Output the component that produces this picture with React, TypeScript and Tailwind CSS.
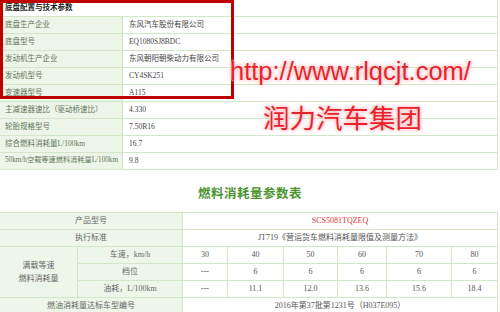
import React from "react";

const specs: [string, string][] = [
  ["底盘生产企业", "东风汽车股份有限公司"],
  ["底盘型号", "EQ1080SJ8BDC"],
  ["发动机生产企业", "东风朝阳朝柴动力有限公司"],
  ["发动机型号", "CY4SK251"],
  ["变速器型号", "A115"],
  ["主减速器速比（驱动桥速比）", "4.330"],
  ["轮胎规格型号", "7.50R16"],
  ["综合燃料消耗量L/100km", "16.7"],
  ["50km/h空载等速燃料消耗量L/100km", "9.8"],
];

const speeds = ["30", "40", "50", "60", "70", "80"];
const gears = ["---", "6", "6", "6", "6", "6"];
const fuel = ["---", "11.1", "12.0", "13.6", "15.6", "18.4"];

const line = "border-[#d2e7c8]";
const label = `bg-[#eef6e9] border-r border-b ${line} flex items-center justify-center text-[#666] whitespace-nowrap`;
const cell = `border-r border-b ${line} flex items-center justify-center text-[#555] whitespace-nowrap`;

export default function App() {
  return (
    <div
      className="relative w-[500px] h-[312px] overflow-hidden bg-white text-[7.5px] leading-none"
      style={{ fontFamily: '"Liberation Serif", "Noto Sans CJK SC", serif' }}
    >
      {/* chassis table */}
      <div className={`w-[498px] border-r ${line}`}>
        <div className={`h-[17px] border-b ${line} pl-[5px] flex items-center font-bold text-[#222]`}>
          底盘配置与技术参数
        </div>
        {specs.map(([k, v]) => (
          <div key={k} className={`grid grid-cols-[123px_1fr] h-[17px] border-b ${line}`}>
            <div
              className={`bg-[#edf5e8] border-r ${line} pl-[5px] flex items-center whitespace-nowrap overflow-hidden text-[#5f7658] ${
                k.length > 20 ? "text-[7.2px]" : ""
              }`}
            >
              {k}
            </div>
            <div className="pl-[6px] flex items-center text-[#444]">{v}</div>
          </div>
        ))}
      </div>

      <div className="h-[42px] pt-[4px] flex items-center justify-center">
        <span
          className="text-[12.5px] font-bold text-[#4b9430] tracking-[0.5px]"
          style={{ fontFamily: '"Noto Sans CJK SC", sans-serif' }}
        >
          燃料消耗量参数表
        </span>
      </div>

      {/* fuel table */}
      <div
        className={`w-[498px] border-t ${line} grid grid-cols-[78px_105px_45px_56px_54px_49px_65px_46px] auto-rows-[17px] text-[8px]`}
      >
        <div className={`${label} col-span-2`}>产品型号</div>
        <div className={`${cell} col-span-6 text-[#d9383a]`}>SCS5081TQZEQ</div>

        <div className={`${label} col-span-2`}>执行标准</div>
        <div className={`${cell} col-span-6`}>JT719《营运货车燃料消耗量限值及测量方法》</div>

        <div className={`${label} row-span-3 flex-col gap-[5px]`}>
          <span>满载等速</span>
          <span>燃料消耗量</span>
        </div>
        <div className={label}>车速，km/h</div>
        {speeds.map((s, i) => (
          <div key={"s" + i} className={cell}>{s}</div>
        ))}
        <div className={label}>档位</div>
        {gears.map((s, i) => (
          <div key={"g" + i} className={cell}>{s}</div>
        ))}
        <div className={label}>油耗，L/100km</div>
        {fuel.map((s, i) => (
          <div key={"f" + i} className={cell}>{s}</div>
        ))}

        <div className={`${label} col-span-2`}>燃油消耗量达标车型编号</div>
        <div className={`${cell} col-span-6`}>2016年第37批第1231号（H037E095）</div>
      </div>

      {/* highlight box */}
      <div className="absolute left-0 top-0 w-[234px] h-[99px] border-[3px] border-[#c00000]" />

      {/* watermark */}
      <div
        className="absolute left-[230px] top-[59px] text-[25.5px] leading-[25px] text-[#e8222a] [text-shadow:0_0_2px_#fff,0_0_3px_#ff9ca2,0_0_5px_#ffb8bc]"
        style={{ fontFamily: '"Liberation Sans", sans-serif' }}
      >
        http://www.rlqcjt.com/
      </div>
      <div
        className="absolute left-[263px] top-[103px] text-[26.5px] leading-[27px] text-[#e8222a] [text-shadow:0_0_2px_#fff,0_0_3px_#ff9ca2,0_0_5px_#ffb8bc]"
        style={{ fontFamily: '"Noto Sans CJK SC", sans-serif' }}
      >
        润力汽车集团
      </div>
    </div>
  );
}
